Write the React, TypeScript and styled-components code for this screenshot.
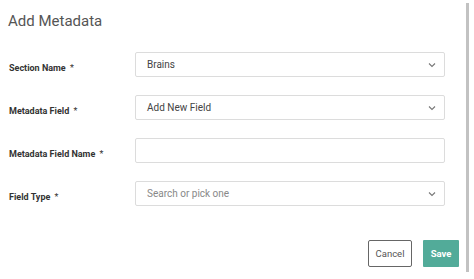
import React from 'react'
import styled, { createGlobalStyle } from 'styled-components'

const Global = createGlobalStyle`
  html, body {
    margin: 0;
    padding: 0;
    background: #fff;
  }
  * { box-sizing: border-box; }
`

interface FieldProps {
  label: string
  value?: string
  placeholder?: boolean
  select?: boolean
}

const Chevron = () => (
  <svg width='8' height='6' viewBox='0 0 8 6'>
    <path d='M1 1.5 L4 4.5 L7 1.5' fill='none' stroke='#777' strokeWidth='1.1' />
  </svg>
)

const Field: React.FC<FieldProps> = ({ label, value, placeholder, select }) => (
  <Row>
    <Label>
      {label} <Star>*</Star>
    </Label>
    <Box>
      <Value placeholder={placeholder ? 1 : 0}>{value}</Value>
      {select && <Chevron />}
    </Box>
  </Row>
)

const App: React.FC = () => {
  return (
    <>
      <Global />
      <Panel>
        <Title>Add Metadata</Title>
        <Form>
          <Field label='Section Name' value='Brains' select />
          <Field label='Metadata Field' value='Add New Field' select />
          <Field label='Metadata Field Name' />
          <Field label='Field Type' value='Search or pick one' placeholder select />
        </Form>
        <Footer>
          <Cancel>Cancel</Cancel>
          <Save>Save</Save>
        </Footer>
      </Panel>
    </>
  )
}

export default App

const Panel = styled.div`
  width: 466px;
  height: 272px;
  background: #fff;
  box-shadow: 3px 3px 0 #c2c2c2;
  padding: 11px 21px 0 9px;
  font-family: 'Roboto', 'Liberation Sans', sans-serif;
  display: flex;
  flex-direction: column;
`

const Title = styled.h1`
  margin: 0 0 0 -1px;
  font-size: 15px;
  font-weight: 400;
  color: #555;
  line-height: 20px;
`

const Form = styled.div`
  margin-top: 21px;
  display: flex;
  flex-direction: column;
  gap: 18px;
`

const Row = styled.div`
  display: grid;
  grid-template-columns: 126px 310px;
  align-items: center;
  height: 25px;
`

const Label = styled.div`
  font-size: 9px;
  font-weight: 700;
  color: #333;
  padding-top: 6px;
`

const Star = styled.span`
  font-weight: 400;
  margin-left: 2px;
`

const Box = styled.div`
  height: 25px;
  border: 1px solid #dcdcdc;
  border-radius: 2px;
  display: flex;
  align-items: center;
  justify-content: space-between;
  padding: 0 8px 0 11px;
`

const Value = styled.span<{ placeholder: number }>`
  font-size: 10px;
  color: ${p => (p.placeholder ? '#888' : '#444')};
`

const Footer = styled.div`
  margin-top: auto;
  margin-bottom: 5px;
  display: flex;
  justify-content: flex-end;
  gap: 11px;
  margin-right: -14px;
`

const Cancel = styled.button`
  width: 44px;
  height: 27px;
  background: #fff;
  border: 1px solid #666;
  border-radius: 2px;
  font-family: inherit;
  font-size: 9.5px;
  color: #555;
  padding: 0;
`

const Save = styled.button`
  width: 36px;
  height: 27px;
  background: #52ab99;
  border: none;
  border-radius: 1px;
  font-family: inherit;
  font-size: 9.5px;
  font-weight: 700;
  color: #fff;
  padding: 0;
`
